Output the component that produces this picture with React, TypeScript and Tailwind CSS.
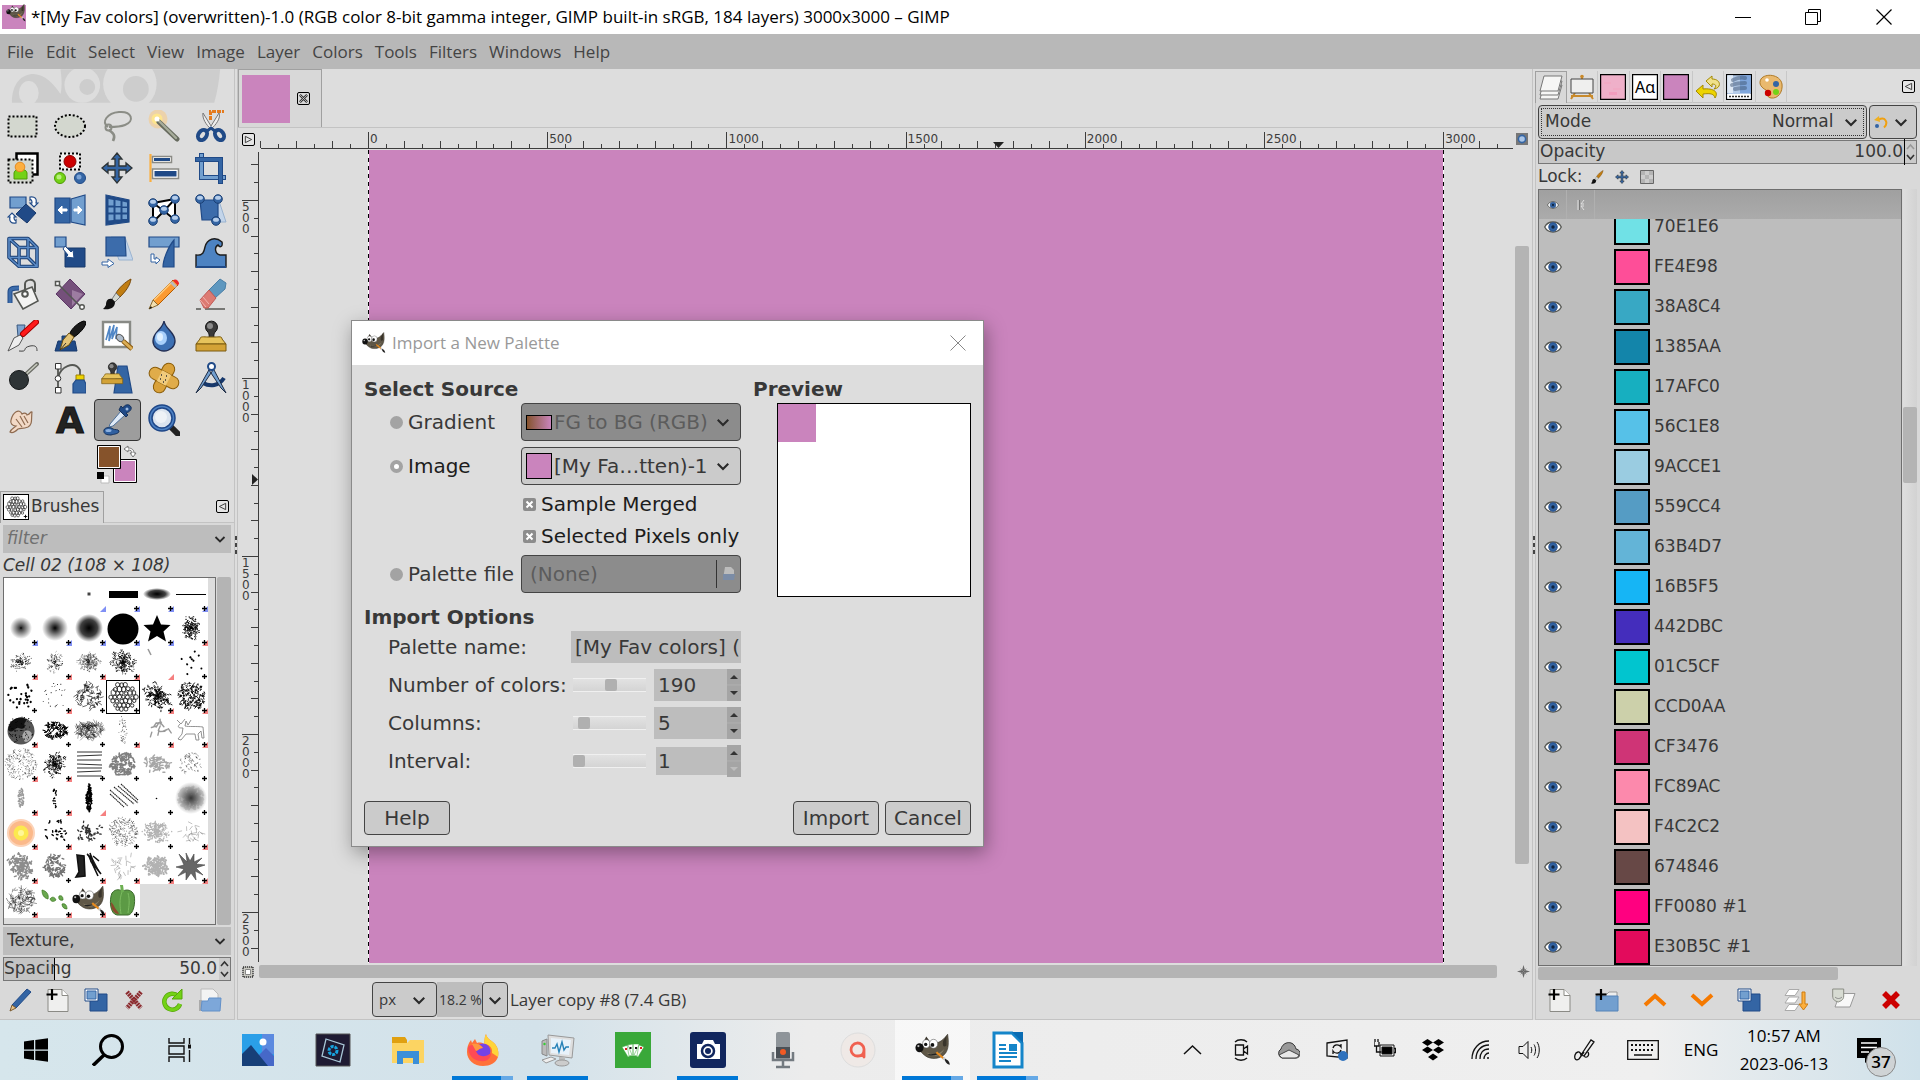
import type { ReactNode } from 'react';

const PINK = '#ca84bd';

/* ---------- shared bits ---------- */

function Icon({ children, className = 'h-8 w-8', box = '0 0 32 32' }: { children: ReactNode; className?: string; box?: string }) {
  return (
    <svg viewBox={box} className={`shrink-0 ${className}`} fill="none" aria-hidden="true">
      {children}
    </svg>
  );
}

function Chevron({ className = 'h-3 w-3' }: { className?: string }) {
  return (
    <Icon box="0 0 12 12" className={`pointer-events-none ${className}`}>
      <path d="M1.500 4l4.500 4.500L10.500 4" stroke="#2a2a2a" strokeWidth="1.800" />
    </Icon>
  );
}

function Wilber({ className = 'h-6 w-6' }: { className?: string }) {
  return (
    <Icon className={className}>
      <path d="M5 11c3 1 5 1 8-1 6 1 11-1 16-8 1 7 1 13-2 17-4 5-13 6-18 2-3-2-5-5-6-7z" fill="#5f5747" stroke="#39342b" strokeWidth=".6" />
      <path d="M8 8l2-4 3 4zM25 8l3-5 0 9c-2 2-4 1-3-4z" fill="#39342b" />
      <path d="M10 18c5 3 12 2 16-3-3 7-11 8-16 3z" fill="#8a8069" />
      <ellipse cx="10" cy="10.500" rx="3.200" ry="3.700" fill="#fff" stroke="#555" strokeWidth=".5" />
      <ellipse cx="16.500" cy="10.500" rx="3.700" ry="4" fill="#fff" stroke="#555" strokeWidth=".5" />
      <circle cx="9.500" cy="11" r="1.500" fill="#111" />
      <circle cx="15.500" cy="11.500" r="1.700" fill="#111" />
      <ellipse cx="4" cy="14" rx="3.600" ry="4" fill="#111" />
      <circle cx="3" cy="12.500" r="1" fill="#bbb" />
      <path d="M12 20c3 1 6 0 9-1" stroke="#222" />
      <path d="M19 18l7 6" stroke="#e58a1f" strokeWidth="2" />
      <path d="M25 23l2 1.500" stroke="#ccc" strokeWidth="2.500" />
      <path d="M26.500 24c2 0 4 2 4.500 5-2 0-4.500-2-4.500-5z" fill="#222" />
    </Icon>
  );
}

function DockMenuButton({ flip = false }: { flip?: boolean }) {
  return (
    <button aria-label="Tab menu" className="flex h-[13px] w-[13px] items-center justify-center rounded-xs border border-black bg-[#e6e6e6]">
      <Icon box="0 0 10 10" className="h-[9px] w-[9px]">
        <path d={flip ? 'M1.500 1.500v7l7-3.500z' : 'M8.500 1.500v7L1.500 5z'} stroke="#333" />
      </Icon>
    </button>
  );
}

function DupIcon() {
  return (
    <Icon box="0 0 24 24" className="h-6 w-6">
      <path d="M6 6h17v17H6z" fill="#3465a4" stroke="#204a87" />
      <path d="M1 1h13v12H1z" fill="#fff" stroke="#204a87" />
      <path d="M3 3h9v8H3z" fill="#729fcf" stroke="#3465a4" />
    </Icon>
  );
}

function NewPageIcon() {
  return (
    <Icon box="0 0 24 24" className="h-6 w-6">
      <path d="M2 1.500h14l6 6V23.500H2z" fill="#efefee" stroke="#8a8a85" />
      <path d="M16 1.500v6h6" fill="#fff" stroke="#8a8a85" />
      <path d="M6 1v11M.500 6.500h11" stroke="#000" strokeWidth="2.200" />
    </Icon>
  );
}

/* ---------- toolbox ---------- */

const DOTS = { stroke: '#000', strokeWidth: 2, strokeDasharray: '2 2' };
const OUT = { stroke: '#204a87', strokeWidth: 1.2 };

function Knob({ x, y }: { x: number; y: number }) {
  return (
    <g>
      <circle cx={x} cy={y} r="4.300" fill="#3465a4" stroke="#1b3f73" />
      <ellipse cx={x} cy={y - 1.3} rx="3" ry="2" fill="#b5cdea" />
    </g>
  );
}

function Stamp({ small = false }: { small?: boolean }) {
  return (
    <g transform={small ? 'scale(.7)' : undefined}>
      <path d="M13 20c2-4 1-6 0-8a6 6 0 1 1 7 0c-1 2-2 4 0 8z" fill="#3a3a3a" stroke="#111" />
      <circle cx="15" cy="6" r="3" fill="#8a8a8a" />
      <path d="M5 19c0-3 4-2 8-2h7c4 0 7-1 7 2l4 5H1z" fill="#e6c35c" stroke="#7a5a10" />
      <path d="M1 24h30v7H1z" fill="#d3a236" stroke="#7a5a10" />
    </g>
  );
}

const TOOLS: { name: string; art: ReactNode }[] = [
  { name: 'Rectangle Select', art: <path d="M1.500 6.500h28v20h-28z" fill="#d3d7cf" {...DOTS} /> },
  { name: 'Ellipse Select', art: <ellipse cx="16" cy="16" rx="15" ry="11" fill="#d3d7cf" {...DOTS} /> },
  {
    name: 'Free Select',
    art: (
      <g stroke="#8b8d86" strokeWidth="2">
        <path d="M7 17C0 12 6 3 18 2c13-1 16 9 6 13-5 2-12 2-16 2" />
        <circle cx="7.500" cy="17.500" r="3" />
        <path d="M8 20c4 3 7 5 4 11" strokeWidth="2.600" />
      </g>
    ),
  },
  {
    name: 'Fuzzy Select',
    art: (
      <g>
        <circle cx="10" cy="9" r="9.500" fill="#fcc77a" opacity=".5" />
        <circle cx="9" cy="9" r="5.500" fill="#fde58e" />
        <path d="M11 12l18 17" stroke="#666a5e" strokeWidth="5" strokeLinecap="round" />
        <path d="M11 11l17 17" stroke="#a7ad9b" strokeWidth="2.400" strokeLinecap="round" />
        <circle cx="9" cy="9" r="2.500" fill="#fff" />
      </g>
    ),
  },
  {
    name: 'Scissors Select',
    art: (
      <g>
        <path d="M8 3c-1 5 3 12 8 16 5-4 10-11 8-16l-8 13z" fill="#eee" stroke="#777" />
        <path d="M15.500 10V1.500H29" stroke="#e57b1e" strokeWidth="3" strokeDasharray="4 1" />
        <ellipse cx="7.500" cy="25" rx="4" ry="5.500" transform="rotate(35 7.500 25)" stroke="#204a87" strokeWidth="4" />
        <ellipse cx="24.500" cy="25" rx="4" ry="5.500" transform="rotate(-35 24.500 25)" stroke="#204a87" strokeWidth="4" />
        <path d="M12 21l4-3 4 3" stroke="#204a87" strokeWidth="3" />
      </g>
    ),
  },
  {
    name: 'Foreground Select',
    art: (
      <g>
        <path d="M9.500 1.500h21v21h-21z" fill="#fff" stroke="#000" strokeWidth="2.500" />
        <path d="M1.500 7.500h24v23h-24z" fill="#d3d7cf" {...DOTS} />
        <path d="M7 27v-6c0-5 13-5 13 0v6z" fill="#73d216" stroke="#4e9a06" />
        <circle cx="13" cy="15" r="4.800" fill="#fcaf3e" stroke="#e58a1f" />
      </g>
    ),
  },
  {
    name: 'Select by Color',
    art: (
      <g>
        <path d="M6 1.500h20v16H6z" fill="#f2f2f0" {...DOTS} />
        <circle cx="16" cy="9.500" r="6" fill="#cc0000" stroke="#8a0000" />
        <circle cx="6" cy="26" r="5.500" fill="#73d216" stroke="#4e9a06" />
        <circle cx="26" cy="26" r="5.500" fill="#3465a4" stroke="#204a87" />
        <circle cx="5" cy="25" r="2.500" fill="#b6ee7b" />
        <circle cx="25" cy="25" r="2.500" fill="#7ba3d6" />
      </g>
    ),
  },
  {
    name: 'Move',
    art: <path d="M16 1l5 6h-3v7h7v-3l6 5-6 5v-3h-7v7h3l-5 6-5-6h3v-7H7v3l-6-5 6-5v3h7V7h-3z" fill="#3465a4" stroke="#2e3436" strokeWidth="1.300" />,
  },
  {
    name: 'Align',
    art: (
      <g>
        <path d="M2.500 2v28" stroke="#fcaf3e" strokeWidth="2.200" />
        <path d="M4.500 4.500h19v6h-19zM4.500 17h26v9.500h-26z" fill="#fff" stroke="#8a8a85" strokeWidth="1.500" />
        <path d="M6 6h16v3H6zM6.500 19h22v5.500h-22z" fill="#204a87" />
      </g>
    ),
  },
  {
    name: 'Crop',
    art: (
      <g>
        <path d="M6.500 1v24.500H31" stroke="#204a87" strokeWidth="5" />
        <path d="M6.500 2v23.500H30" stroke="#729fcf" strokeWidth="3" />
        <path d="M0 7.500h25.500V32" stroke="#204a87" strokeWidth="5" />
        <path d="M1 7.500h24.500V31" stroke="#3465a4" strokeWidth="3" />
      </g>
    ),
  },
  {
    name: 'Unified Transform',
    art: (
      <g>
        <path d="M3 3h16v11H3z" fill="#729fcf" {...OUT} />
        <path d="M19 10l10 9-9 10-11-9z" fill="#204a87" stroke="#17386b" />
        <path d="M23 3c5-1 7 2 6 6h2l-4 4-4-4h2c0-3-1-4-2-3z" fill="#fff" {...OUT} />
        <path d="M9 29c-5 1-7-2-6-6H1l4-4 4 4H7c0 3 1 4 2 3z" fill="#fff" {...OUT} />
      </g>
    ),
  },
  {
    name: 'Flip',
    art: (
      <g>
        <path d="M1 4h15v25H1z" fill="#3465a4" {...OUT} />
        <path d="M17 5l14-4v30l-14-3z" fill="#729fcf" {...OUT} />
        <path d="M4 16l4-4v3h5v2H8v3zM28 16l-4-4v3h-4v2h4v3z" fill="#fff" stroke="#fff" />
      </g>
    ),
  },
  {
    name: 'Perspective',
    art: (
      <g>
        <path d="M5 1l23 5v22L5 31z" fill="#204a87" {...OUT} />
        <path d="M7.500 5l5 1v5.500h-5zM14.500 6l5 1v5h-5zM21.500 7.500l4.500 1v4h-4.500zM7.500 13.500h5v5h-5zM14.500 13.500h5v5h-5zM21.500 14H26v4.500h-4.500zM7.500 20.500h5v5.500l-5 .5zM14.500 20.500h5v5h-5zM21.500 20.500H26v4.500h-4.500z" fill="#729fcf" />
      </g>
    ),
  },
  {
    name: '3D Cage',
    art: (
      <g>
        <path d="M5 9l22-4v21L16 17 5 28z" fill="#fff" stroke="#000" strokeWidth="2" />
        <path d="M5 9l11 8 11-12" stroke="#000" strokeWidth="2" />
        <Knob x={5} y={9} />
        <Knob x={27} y={5} />
        <Knob x={16} y={16} />
        <Knob x={27} y={25} />
        <Knob x={5} y={27} />
      </g>
    ),
  },
  {
    name: 'Cage Transform',
    art: (
      <g>
        <path d="M9 7h15l7 21H17z" fill="#c3d5ea" stroke="#9ab3d0" />
        <path d="M5 6h18v20H7z" fill="#3c6cab" {...OUT} />
        <Knob x={5} y={5} />
        <Knob x={23} y={5} />
        <Knob x={21} y={27} />
      </g>
    ),
  },
  {
    name: '3D Transform',
    art: (
      <g>
        <path d="M2 2.500h19l9 9v19H12l-10-9z" stroke="#1b3f73" strokeWidth="3.600" strokeLinejoin="round" />
        <path d="M12 30.500v-19h18M12 11.500l-10-9M21 2.500v19l9 9M2 21.500h19" stroke="#1b3f73" strokeWidth="3.600" />
        <path d="M2 2.500h19l9 9v19H12l-10-9zM12 30.500v-19h18M12 11.500l-10-9M21 2.500v19l9 9M2 21.500h19" stroke="#5b8bc6" strokeWidth="1.600" />
      </g>
    ),
  },
  {
    name: 'Scale',
    art: (
      <g>
        <path d="M11 12h20v19H11z" fill="#204a87" stroke="#17386b" />
        <path d="M1 1h11v10H1z" fill="#729fcf" {...OUT} />
        <path d="M11 10l6 6 2-2 1 8-8-1 2-2-5-6z" fill="#fff" stroke="#204a87" />
      </g>
    ),
  },
  {
    name: 'Shear',
    art: (
      <g>
        <path d="M10 1h14l8 23H18z" fill="#c3d5ea" stroke="#9ab3d0" />
        <path d="M5 1h19l1 19H5z" fill="#3c6cab" {...OUT} />
        <path d="M1 26h6v-3l6 4.500-6 4V29H1z" fill="#fff" stroke="#3465a4" />
      </g>
    ),
  },
  {
    name: 'Handle Transform',
    art: (
      <g>
        <path d="M1 1h30v10H1z" fill="#729fcf" {...OUT} />
        <path d="M26 4v27H15c0-7 5-20 11-27z" fill="#3465a4" {...OUT} />
        <path d="M3 18h3v5h2v-2l4 3-4 4v-2H3z" fill="#fff" stroke="#3465a4" />
      </g>
    ),
  },
  {
    name: 'Warp Transform',
    art: (
      <g>
        <path d="M1 31V19C8 20 9 16 10 11 12 3 20 0 27 6c1 5-2 6-4 3-4 2-3 9 2 10h6v12z" fill="#4d83c2" stroke="#1c1c1c" strokeWidth="1.400" />
        <path d="M1 31h30" stroke="#204a87" strokeWidth="2" />
      </g>
    ),
  },
  {
    name: 'Bucket Fill',
    art: (
      <g>
        <path d="M3 25V14c0-3 2-4 9-4" stroke="#204a87" strokeWidth="5" />
        <path d="M3 25V14c0-3 2-4 9-4" stroke="#3c6cab" strokeWidth="3" />
        <path d="M7 16l18-7 6 14-15 8z" fill="#f3f3f2" stroke="#555753" strokeWidth="1.600" />
        <path d="M18 16V6c0-5 10-6 10 0v8" stroke="#555753" strokeWidth="2" />
        <circle cx="18" cy="16" r="2.800" stroke="#555753" strokeWidth="2" fill="#fff" />
      </g>
    ),
  },
  {
    name: 'Gradient',
    art: (
      <g>
        <path d="M16 1l15 15-14 15L2 16z" fill="#75507b" stroke="#5c3566" />
        <path d="M18 12l11 4-11 12z" fill="#b79abb" opacity=".6" />
        <path d="M3 5l24 24" stroke="#555753" strokeWidth="1.600" />
        <path d="M1.500 3.500h4v4h-4z" fill="#fff" stroke="#555753" strokeWidth="1.500" />
        <circle cx="28" cy="29" r="2.300" fill="#fff" stroke="#555753" strokeWidth="1.500" />
      </g>
    ),
  },
  {
    name: 'Paintbrush',
    art: (
      <g>
        <path d="M30 1c-6 3-12 9-15 14l4 4c5-5 10-11 11-18z" fill="#c17d11" stroke="#7a4a0a" />
        <path d="M15 15l-4 6 3 3 5-5z" fill="#d3d7cf" stroke="#777" />
        <path d="M11 21c-5-1-6 3-6 6-1 2-2 3-3 4 7 1 12-1 12-7z" fill="#111" />
      </g>
    ),
  },
  {
    name: 'Pencil',
    art: (
      <g>
        <path d="M25 2l5 5L10 27l-5-5z" fill="#fb9a31" stroke="#b35c00" />
        <path d="M23 5l-17 17" stroke="#ffd083" strokeWidth="1.500" />
        <path d="M5 22l5 5-9 4z" fill="#f3dfb0" stroke="#8a6a30" />
        <path d="M3 28l-2 3 3-1z" fill="#111" />
        <path d="M22 5l5 5 2-2-5-5z" fill="#bbb" />
        <path d="M25 2.500c3-3 8 2 5 5z" fill="#ef2929" />
      </g>
    ),
  },
  {
    name: 'Eraser',
    art: (
      <g>
        <path d="M1 31h5M10 31h20" stroke="#555753" strokeWidth="1.600" />
        <path d="M14 12L25 1l6 4-1 6-10 9z" fill="#5e97bf" stroke="#4a7fa6" />
        <path d="M5 22l9-10 7 8-8 10H9z" fill="#dd7a72" stroke="#c05a55" />
        <path d="M5 22l6 7M8 19l6 7" stroke="#f3b5b0" />
      </g>
    ),
  },
  {
    name: 'Airbrush',
    art: (
      <g>
        <path d="M10 5h8l-2 12h-5z" fill="#7fa3cf" stroke="#3a5a80" />
        <path d="M29 2L16 14" stroke="#a00000" strokeWidth="6" strokeLinecap="round" />
        <path d="M29 2L16 14" stroke="#ff1a1a" strokeWidth="4" strokeLinecap="round" />
        <path d="M1 31l6-13 6-3 3 3-4 7z" fill="#eee" stroke="#555" />
        <path d="M12 31c10 1 2-3 11-5 6-1 7 1 7 5" stroke="#444" />
      </g>
    ),
  },
  {
    name: 'Ink',
    art: (
      <g>
        <path d="M1 31l3-10h4v-5h8v5h5l2 10z" fill="#204a87" stroke="#17386b" />
        <path d="M30 1c-5 1-12 7-14 12l4 4c5-3 12-10 12-15z" fill="#1a1a1a" stroke="#000" />
        <path d="M15 13l-6 7-3 10 9-5 5-8z" fill="#e3c478" stroke="#6b5010" />
        <path d="M6 30l6-7" stroke="#333" />
      </g>
    ),
  },
  {
    name: 'MyPaint Brush',
    art: (
      <g>
        <path d="M2 2h27v25H2z" fill="#fff" stroke="#888a85" strokeWidth="2.400" />
        <path d="M5 20L9 6l-1 15 5-16-2 14 5-12-1 11 2-1" stroke="#4f86c6" strokeWidth="1.600" />
        <ellipse cx="19" cy="18" rx="4" ry="3" transform="rotate(40 19 18)" fill="#aebccb" stroke="#555" />
        <path d="M22 21l9 8" stroke="#8a5a10" strokeWidth="5" />
        <path d="M22 21l9 8" stroke="#dcae55" strokeWidth="3" />
      </g>
    ),
  },
  {
    name: 'Blur',
    art: (
      <g>
        <path d="M16 1c1 8 11 11 11 20a11 10 0 0 1-22 0C5 12 15 9 16 1z" fill="#3d70b3" stroke="#222f55" strokeWidth="1.400" />
        <ellipse cx="13" cy="18" rx="6" ry="7" fill="#a9d0fb" />
        <ellipse cx="12" cy="17" rx="3" ry="4" fill="#dff0ff" />
      </g>
    ),
  },
  { name: 'Clone', art: <Stamp /> },
  {
    name: 'Dodge / Burn',
    art: (
      <g>
        <path d="M18 13L30 2" stroke="#6b6d66" strokeWidth="4" strokeLinecap="round" />
        <path d="M18 13L30 2" stroke="#c9ccc0" strokeWidth="1.600" />
        <circle cx="12" cy="18" r="9.500" fill="#2e3436" stroke="#16191a" />
      </g>
    ),
  },
  {
    name: 'Paths',
    art: (
      <g>
        <path d="M4 4v24M4 16C6 5 20-2 26 8v5" stroke="#555753" strokeWidth="1.800" />
        <path d="M1.500 1.500h5.500v5.500H1.500zM1.500 25.500h5.500v5.500H1.500z" fill="#fff" stroke="#333" />
        <circle cx="4" cy="16.500" r="2.800" fill="#fff" stroke="#333" />
        <path d="M22 13h8v5h-8z" fill="#edd400" stroke="#a08000" />
        <path d="M19 31V22l3-4h8l2 4v9z" fill="#3465a4" {...OUT} />
      </g>
    ),
  },
  {
    name: 'Perspective Clone',
    art: (
      <g>
        <path d="M17 4h9l5 27H13z" fill="#3465a4" {...OUT} />
        <Stamp small />
      </g>
    ),
  },
  {
    name: 'Heal',
    art: (
      <g stroke="#8a5c08">
        <rect x="10" y="0" width="12" height="32" rx="6" fill="#d9a13a" transform="rotate(28 16 16)" />
        <rect x="0" y="10" width="32" height="12" rx="6" fill="#e0ac4a" transform="rotate(28 16 16)" />
        <rect x="11" y="10" width="10" height="12" fill="#f0cb7c" stroke="none" transform="rotate(28 16 16)" />
        <path d="M13 13h1M18 14h1M12 17h1M17 18h1M15 20h1" stroke="#333" strokeWidth="1.500" />
      </g>
    ),
  },
  {
    name: 'Measure',
    art: (
      <g>
        <path d="M8 21c7 4 16 3 21-5" stroke="#17386b" strokeWidth="4" />
        <path d="M15 6L1 31l5-5L18 8zM18 6l13 25-5-5L14 8z" fill="#729fcf" stroke="#1c2b44" />
        <circle cx="16.500" cy="4.500" r="3.500" fill="#fff" stroke="#204a87" strokeWidth="2" />
      </g>
    ),
  },
  {
    name: 'Smudge',
    art: (
      <path d="M3 28c1-3 4-4 6-6-4 0-6-3-5-6C6 8 12 4 15 10c3-2 5 0 5 1 4-1 3-4 5-3-1 7 1 12-4 15-5 2-7 1-10 2-2 2-5 5-8 3zM9 15l6 8M13 12l5 9M17 12l4 7" fill="#f2d9c6" stroke="#8f6b50" strokeWidth="1.200" />
    ),
  },
  {
    name: 'Text',
    art: (
      <text x="16" y="29" textAnchor="middle" fontSize="36" fontWeight="bold" fontFamily="DejaVu Sans, sans-serif" fill="#222" stroke="#111">
        A
      </text>
    ),
  },
  {
    name: 'Color Picker',
    art: (
      <g>
        <path d="M9 20L20 7l4 4-12 11-4 1z" fill="#dfeaf7" stroke="#4c6f99" />
        <path d="M18 6l7 7 2-2-2-2c4-1 6-4 5-6-2-4-7-2-8 1l-2-2z" fill="#204a87" stroke="#16325c" />
        <circle cx="26" cy="5" r="1.500" fill="#9dbbe2" />
        <path d="M3 26c1-3 7-3 9-1 2 1 5 0 6 2 0 3-5 3-8 4-4 0-8-1-7-5z" fill="#2f5fa0" stroke="#16325c" />
        <ellipse cx="7.500" cy="26.500" rx="3" ry="1.500" fill="#8bb0df" />
      </g>
    ),
  },
  {
    name: 'Zoom',
    art: (
      <g>
        <path d="M22 22l8 8" stroke="#222" strokeWidth="6" strokeLinecap="round" />
        <circle cx="14" cy="14" r="11.500" fill="#dbe4ef" stroke="#1f4788" strokeWidth="4.500" />
        <circle cx="14" cy="14" r="11.500" stroke="#4d82c4" strokeWidth="1.500" />
        <circle cx="13" cy="13" r="6" fill="#eef2f7" />
      </g>
    ),
  },
];

function Toolbox() {
  return (
    <section aria-label="Toolbox" className="flex flex-col">
      <svg viewBox="0 0 237 34" className="h-[34px] w-[235px]" aria-hidden="true">
        <path d="M12 34C12 14 22 5 34 5c12 1 20 10 27 20 2-8 1-18 0-25h161c-1 12-3 24-6 34z" fill="#cdcdcd" />
        <g fill="#dddddd">
          <ellipse cx="29" cy="24" rx="10" ry="12" />
          <circle cx="83" cy="16" r="18" />
          <circle cx="131" cy="15" r="27" />
        </g>
        <circle cx="88" cy="18" r="8" fill="#cdcdcd" />
        <circle cx="137" cy="20" r="13" fill="#cdcdcd" />
      </svg>
      <div className="grid w-[235px] grid-cols-5 pt-0.5">
        {TOOLS.map(({ name, art }) => (
          <button
            key={name}
            aria-label={name}
            className={
              name === 'Color Picker'
                ? 'flex h-[42px] items-center justify-center rounded-sm border border-[#333] bg-[#9d9d9d] pr-0.5'
                : 'flex h-[42px] items-center justify-center rounded-sm pr-0.5'
            }
          >
            <Icon>{art}</Icon>
          </button>
        ))}
      </div>
      <div className="flex h-[50px] justify-center pt-1">
        <svg viewBox="0 0 40 39" className="h-[39px] w-10" role="img" aria-label="Foreground and background colors">
          <path d="M16.500 14.500h23v23h-23z" fill={PINK} stroke="#000" />
          <path d="M17.500 15.500h21v21h-21z" fill="none" stroke="#fff" />
          <path d="M.5.5h23v23H.5z" fill="#86532b" stroke="#000" />
          <path d="M1.500 1.500h21v21h-21z" fill="none" stroke="#fff" />
          <path d="M4 31h8v7H4z" fill="#fff" stroke="#bbb" />
          <path d="M0 27h7v7H0z" fill="#000" />
          <path d="M27 4l4-3v2c4 0 6 2 6 5h2l-3 4-3-4h2c0-2-1-3-4-3v2z" fill="#fff" stroke="#777" />
        </svg>
      </div>
    </section>
  );
}

/* ---------- brushes ---------- */

type Spray = { n: number; rx: number; ry: number; w: number; o?: number; flat?: boolean; dash?: number };
type Brush = { mark?: 'plus' | 'plusRed' | 'plusBlue' | 'red' | 'blue'; spray?: Spray; art?: ReactNode };

function makeRandom(seed: number) {
  let s = seed * 7919 + 17;
  return () => {
    s = (s * 16807) % 2147483647;
    return s / 2147483647;
  };
}

// centre-heavy sprays get a lobed outline, flat ones stay round
function sprayPath(seed: number, { n, rx, ry, flat, dash = 0.1 }: Spray) {
  const rand = makeRandom(seed + 3);
  let d = '';
  for (let i = 0; i < n; i++) {
    const a = rand() * Math.PI * 2;
    const r = flat ? Math.sqrt(rand()) : Math.pow(rand(), 0.75) * (0.85 + 0.3 * Math.sin(a * 3 + seed) * Math.cos(a * 5));
    const x = 17 + Math.cos(a) * r * rx;
    const y = 16 + Math.sin(a) * r * ry;
    const t = rand() * Math.PI * 2;
    d += `M${x.toFixed(1)} ${y.toFixed(1)}l${(Math.cos(t) * dash).toFixed(1)} ${(Math.sin(t) * dash + 0.1).toFixed(1)}`;
  }
  return d;
}

function cellPath() {
  const rand = makeRandom(9);
  let d = '';
  for (let row = -3; row <= 3; row++) {
    for (let col = -4; col <= 4; col++) {
      const x = col * 4.2 + (row % 2 ? 2.1 : 0) + rand();
      const y = row * 4 + rand();
      if (Math.hypot(x, y) > 13.5) continue;
      const r = 1.6 + rand() * 0.7;
      d += `M${(17 + x - r).toFixed(1)} ${(16.5 + y).toFixed(1)}a${r.toFixed(1)} ${r.toFixed(1)} 0 1 0 ${(r * 2).toFixed(1)} 0a${r.toFixed(1)} ${r.toFixed(1)} 0 1 0 ${(-r * 2).toFixed(1)} 0`;
    }
  }
  return d;
}

function Soft({ id, r, ry = r, solid }: { id: string; r: number; ry?: number; solid: string }) {
  return (
    <>
      <radialGradient id={id}>
        <stop offset="0" stopColor="#000" />
        <stop offset={solid} stopColor="#000" stopOpacity=".75" />
        <stop offset="1" stopColor="#000" stopOpacity="0" />
      </radialGradient>
      <ellipse cx="17" cy="16" rx={r} ry={ry} fill={`url(#${id})`} />
    </>
  );
}

const CELLS = <path d={cellPath()} stroke="#222" strokeWidth=".9" fill="none" />;

const BRUSHES: Brush[] = [
  {},
  {},
  { mark: 'blue', art: <path d="M15.500 14.500h3v3h-3z" fill="#444" /> },
  { mark: 'plusBlue', art: <path d="M3 13h29v7H3z" fill="#000" /> },
  { mark: 'plusBlue', art: <Soft id="b4" r={14} ry={6} solid="60%" /> },
  { mark: 'plusBlue', art: <path d="M2 16.500h30" stroke="#000" /> },
  { mark: 'plusBlue', art: <Soft id="b6" r={11} solid="15%" /> },
  { mark: 'plusBlue', art: <Soft id="b7" r={13} solid="25%" /> },
  { mark: 'plusBlue', art: <Soft id="b8" r={14} solid="60%" /> },
  { mark: 'plusBlue', art: <circle cx="17" cy="17" r="15.500" fill="#000" /> },
  { mark: 'plusBlue', art: <path d="M17 3l4 9.500 9.500.5-7 6.500 2.500 10L17 24l-9 5.500 2.500-10-7-6.500 9.500-.5z" fill="#000" /> },
  { mark: 'plusRed', spray: { n: 300, rx: 11, ry: 12, w: 1 } },
  { mark: 'plusRed', spray: { n: 150, rx: 12, ry: 9, w: 0.9, o: 0.8 } },
  { mark: 'plusRed', spray: { n: 130, rx: 8, ry: 13, w: 0.9, o: 0.7 } },
  { mark: 'plusRed', spray: { n: 380, rx: 11, ry: 12, w: 1, o: 0.4 } },
  { mark: 'plusRed', spray: { n: 380, rx: 13, ry: 14, w: 1, o: 0.85 } },
  { mark: 'red', art: <path d="M8 3l3 6" stroke="#999" strokeWidth="1.500" /> },
  { mark: 'plus', spray: { n: 11, rx: 13, ry: 13, w: 2, flat: true } },
  { mark: 'plus', spray: { n: 30, rx: 14, ry: 13, w: 2.2, flat: true } },
  { mark: 'plusRed', spray: { n: 22, rx: 14, ry: 13, w: 0.9, flat: true } },
  { mark: 'plus', spray: { n: 90, rx: 13, ry: 13, w: 0.6, flat: true, dash: 3 } },
  { mark: 'plus', art: CELLS },
  { mark: 'plusRed', spray: { n: 190, rx: 15, ry: 14, w: 0.9, dash: 1.4 } },
  { mark: 'plusRed', spray: { n: 200, rx: 14, ry: 14, w: 0.9, flat: true, dash: 1.4 } },
  {
    mark: 'plusRed',
    art: (
      <>
        <circle cx="17" cy="17" r="13.500" fill="#555" />
        <path d="M4 16C5 7 12 3 18 3.500c4 1 5 3 3 5s2 5-2 6-4-2-7 0-4 5-8 1.500z" fill="#111" />
        <path d="M20 18c3-3 7-1 8 2s-3 8-6 8-1-3-3-4 0-4 1-6z" fill="#aaa" />
      </>
    ),
    spray: { n: 60, rx: 14, ry: 14, w: 1, flat: true },
  },
  { mark: 'plus', spray: { n: 120, rx: 13, ry: 8, w: 1, flat: true, dash: 2 } },
  { mark: 'plus', spray: { n: 160, rx: 13, ry: 8, w: 0.5, flat: true, dash: 4, o: 0.7 } },
  { mark: 'plusRed', spray: { n: 45, rx: 4, ry: 15, w: 0.9, flat: true, o: 0.6 } },
  { mark: 'plusRed', spray: { n: 12, rx: 14, ry: 12, w: 1.4, flat: true, dash: 5, o: 0.4 } },
  {
    mark: 'plusRed',
    art: <path d="M3 6l4 4 4-5M6 10c-4 4 0 4 3 4l-1 6-4 5 3 1 5-6h9l1 6h3l-1-6 3-3 1 7h2l-1-11c-7-1-14 0-18-1l1-5 2 4 3-5" stroke="#777" fill="none" strokeWidth=".8" />,
  },
  { mark: 'plusRed', spray: { n: 230, rx: 16, ry: 16, w: 0.7, flat: true, o: 0.7 } },
  { mark: 'plusRed', spray: { n: 380, rx: 12, ry: 13, w: 1, o: 0.85 } },
  { mark: 'plus', art: <path d="M5 4h25M5 8l25-1M5 12h24M5 16l25 1M5 20h25M5 24l24-1M5 28h25" stroke="#333" fill="none" /> },
  { mark: 'plus', spray: { n: 110, rx: 12, ry: 12, w: 1.6, flat: true, dash: 2, o: 0.5 } },
  { mark: 'plus', spray: { n: 80, rx: 14, ry: 12, w: 1.4, dash: 2, o: 0.35 } },
  { mark: 'plus', spray: { n: 60, rx: 12, ry: 12, w: 0.9, flat: true, dash: 1, o: 0.45 } },
  { mark: 'plusRed', spray: { n: 80, rx: 3, ry: 10, w: 1.4, flat: true, o: 0.4 } },
  { mark: 'plusRed', spray: { n: 18, rx: 3, ry: 10, w: 1.6, flat: true } },
  { mark: 'red', spray: { n: 110, rx: 3, ry: 14, w: 1.8, flat: true } },
  { mark: 'plus', art: <path d="M4 8l18 16M4 12l14 13M8 5l20 17M12 4l20 17M15 2l17 16" stroke="#222" strokeWidth="1.100" strokeDasharray="1.500 .5" /> },
  { mark: 'plus', art: <circle cx="16.500" cy="16.500" r=".8" fill="#000" /> },
  { mark: 'plus', spray: { n: 240, rx: 13, ry: 12, w: 2.4, flat: true, o: 0.12 }, art: <Soft id="b41" r={16} solid="1%" /> },
  {
    mark: 'plusRed',
    art: (
      <>
        <circle cx="17" cy="17" r="14" fill="#fcd3b8" />
        <circle cx="17" cy="17" r="12" fill="#fbb98a" />
        <circle cx="17" cy="17" r="7.500" fill="#fce94f" />
        <circle cx="17" cy="17" r="3" fill="#fff799" />
      </>
    ),
  },
  { mark: 'plusRed', spray: { n: 26, rx: 14, ry: 13, w: 1.4, flat: true, dash: 1.5 } },
  { mark: 'plusRed', spray: { n: 50, rx: 14, ry: 13, w: 1.3, dash: 1.5, o: 0.8 } },
  { mark: 'plus', spray: { n: 260, rx: 15, ry: 15, w: 0.7, flat: true, o: 0.7 } },
  { mark: 'plus', spray: { n: 320, rx: 14, ry: 14, w: 1.3, o: 0.3 } },
  { mark: 'plusRed', spray: { n: 24, rx: 11, ry: 13, w: 0.8, flat: true, dash: 4, o: 0.3 } },
  { mark: 'plusRed', spray: { n: 150, rx: 14, ry: 14, w: 1.4, dash: 2, o: 0.45 } },
  { mark: 'plus', spray: { n: 110, rx: 11, ry: 11, w: 1.2, flat: true, dash: 2, o: 0.55 } },
  {
    mark: 'plusRed',
    art: <path d="M5 5l7 1 1 20-9 1 3-5zM15 4c5 3 2 6 5 9l6 13M18 3l4 12 7 9M21 6l6 5" stroke="#111" strokeWidth="1.600" fill="#222" />,
  },
  { mark: 'plusRed', spray: { n: 26, rx: 11, ry: 13, w: 0.8, flat: true, dash: 4, o: 0.3 } },
  { mark: 'plusRed', spray: { n: 300, rx: 13, ry: 13, w: 1.8, o: 0.3 } },
  {
    mark: 'plusRed',
    art: <path d="M5 4l8 8-1-9 4 8 4-7v8l8-4-6 6 9 1-9 3 7 7-8-4 1 9-5-7-5 7v-8l-8 4 6-7-8-2 8-2z" fill="#666" stroke="#444" strokeWidth=".6" />,
  },
  { mark: 'plusRed', spray: { n: 130, rx: 14, ry: 12, w: 0.7, flat: true, dash: 3, o: 0.6 } },
  {
    mark: 'plusRed',
    art: <path d="M4 6c5 1 7 5 6 9-4-1-6-4-6-9zM12 15c2-3 5-2 6 1-2 2-5 2-6-1zM21 12c3-1 4 1 4 4-3 1-5-1-4-4zM24 20c3-1 5 1 5 5-3 0-5-2-5-5z" fill="#6aa84f" stroke="#38761d" strokeWidth=".7" />,
  },
  { mark: 'plusRed' },
  {
    mark: 'plus',
    art: (
      <>
        <path d="M6 9c4-5 8-3 11-2 4-2 9-1 11 4 2 8-1 20-6 20H11C4 30 3 16 6 9z" fill="#5c9a45" stroke="#3c6b2c" />
        <path d="M16 8c-3 8-2 15-1 22M22 9c2 7 1 13 0 20" stroke="#7cbb61" fill="none" />
        <path d="M5 18c3 3 3 4 4 6s3 3 4 6c-6 0-8-6-8-12z" fill="#8a4b2c" />
        <path d="M15 8l-1-7h3l1 7z" fill="#6db052" />
      </>
    ),
  },
];

const PLUS = <path d="M30.500 28v5M28 30.500h5" stroke="#000" strokeWidth="1.300" />;

function BrushCell({ brush, index }: { brush: Brush; index: number }) {
  const { mark, spray, art } = brush;
  return (
    <li className={index === 21 ? 'h-[34px] w-[34px] bg-white outline-1 -outline-offset-1 outline-black' : 'h-[34px] w-[34px] bg-white'}>
      <svg viewBox="0 0 34 34" className="h-[34px] w-[34px]" aria-hidden="true">
        {index === 56 ? <Wilber className="h-[34px] w-[34px]" /> : art}
        {spray && <path d={sprayPath(index, spray)} stroke="#000" strokeWidth={spray.w} strokeOpacity={spray.o ?? 1} strokeLinecap="round" />}
        {mark?.toLowerCase().includes('red') && <path d="M34 28v6h-6z" fill="#f58080" />}
        {mark?.toLowerCase().includes('blue') && <path d="M34 28v6h-6z" fill="#8090f5" />}
        {mark?.startsWith('plus') && PLUS}
      </svg>
    </li>
  );
}

function Brushes() {
  return (
    <section aria-label="Brushes" className="flex min-h-0 flex-1 flex-col text-[17px]">
      <div className="flex h-8 items-center justify-between border-b border-[#c3c3c3] pr-[5px]">
        <div className="flex h-8 w-[104px] items-center gap-0.5 border border-b-0 border-[#a0a0a0] bg-[#d8d8d8] pl-0.5">
          <svg viewBox="0 0 34 34" className="h-[26px] w-[26px] shrink-0 border border-black bg-white" aria-hidden="true">
            {CELLS}
            {PLUS}
          </svg>
          Brushes
        </div>
        <DockMenuButton />
      </div>
      <div className="flex min-h-0 flex-1 flex-col bg-[#d9d9d9] px-[3px] pt-0.5">
        <label className="flex h-7 shrink-0 items-center bg-[#bdbdbd] pr-[5px] pl-1">
          <input aria-label="Filter brushes" placeholder="filter" className="w-full min-w-0 bg-transparent italic outline-none placeholder:text-[#707070]" />
          <Chevron />
        </label>
        <p className="h-6 shrink-0 leading-6 whitespace-nowrap italic">Cell 02 (108 × 108)</p>
        <div className="flex min-h-0 flex-1">
          <ul className="flex min-h-0 flex-1 flex-wrap content-start overflow-hidden border border-[#6e6e6e] bg-[#dddddd]">
            {BRUSHES.map((brush, i) => (
              <BrushCell key={i} brush={brush} index={i} />
            ))}
          </ul>
          <div className="ml-px w-[14px] rounded-xs bg-[#b4b4b4]" />
        </div>
        <label className="mt-0.5 flex h-7 shrink-0 items-center bg-[#bdbdbd] pr-[5px] pl-1">
          <select aria-label="Tag" className="w-full appearance-none bg-transparent outline-none">
            <option>Texture,</option>
          </select>
          <Chevron />
        </label>
        <label className="mt-0.5 flex h-6 shrink-0 items-center border border-[#777] bg-[linear-gradient(to_right,#c4c4c4_50px,#000_50px,#000_51px,#dcdcdc_51px)]">
          Spacing
          <input defaultValue="50.0" className="min-w-0 flex-1 bg-transparent pr-0.5 text-right outline-none" />
          <Spinner />
        </label>
      </div>
      <div className="flex h-[38px] shrink-0 items-center gap-[14px] bg-[#d9d9d9] px-2">
        {BRUSH_ACTIONS.map(({ name, art }) => (
          <button key={name} aria-label={name}>
            {art}
          </button>
        ))}
      </div>
    </section>
  );
}

function Spinner({ dimUp = false }: { dimUp?: boolean }) {
  return (
    <Icon box="0 0 10 22" className="h-[22px] w-[11px] bg-[#cacaca]">
      <path d="M1.500 8L5 4l3.500 4" stroke={dimUp ? '#999' : '#333'} strokeWidth="1.600" />
      <path d="M1.500 14L5 18l3.500-4" stroke="#333" strokeWidth="1.600" />
    </Icon>
  );
}

const BRUSH_ACTIONS: { name: string; art: ReactNode }[] = [
  {
    name: 'Edit brush',
    art: (
      <Icon box="0 0 24 24" className="h-6 w-6">
        <path d="M19 1l4 3L8 20l-4-3z" fill="#3465a4" stroke="#204a87" />
        <path d="M4 17l4 3-6 3z" fill="#e9c48a" stroke="#7a5a30" />
      </Icon>
    ),
  },
  { name: 'New brush', art: <NewPageIcon /> },
  { name: 'Duplicate brush', art: <DupIcon /> },
  {
    name: 'Delete brush',
    art: (
      <Icon box="0 0 24 24" className="h-6 w-6">
        <path d="M5 4l14 16M19 4L5 20" stroke="#8b2a2e" strokeWidth="4.500" strokeDasharray="2 .6" />
      </Icon>
    ),
  },
  {
    name: 'Refresh brushes',
    art: (
      <Icon box="0 0 24 24" className="h-6 w-6">
        <path d="M18 8a8 8 0 1 0 2 8" stroke="#57a70a" strokeWidth="4.500" />
        <path d="M18 8a8 8 0 1 0 2 8" stroke="#73d216" strokeWidth="3" />
        <path d="M12 11h10V1z" fill="#73d216" stroke="#57a70a" />
      </Icon>
    ),
  },
  {
    name: 'Open brush as image',
    art: (
      <Icon box="0 0 24 24" className="h-6 w-6">
        <path d="M3 1h12l5 5v14H3z" fill="#f3f3f3" stroke="#bbb" />
        <path d="M1 12v11h3V12z" fill="#aaa" />
        <path d="M3 22l1-9h6l1-3h12l-1 13H4z" fill="#7da7d9" stroke="#6390c8" />
      </Icon>
    ),
  },
];

/* ---------- image window ---------- */

const STEP_X = 17.92;
const STEP_Y = 17.8;
const RULER_INK = '#3c3c3c';

function tickLength(i: number) {
  if (i % 10 === 0) return 16;
  return i % 2 === 0 ? 7 : 4;
}

function HorizontalRuler() {
  const ticks = Array.from({ length: 130 }, (_, k) => k - 6);
  return (
    <svg className="h-full w-full overflow-hidden" aria-hidden="true">
      <path d="M2 20.500h1252" stroke={RULER_INK} />
      {ticks.map((i) => {
        const x = Math.round(109 + i * STEP_X) + 0.5;
        return x > 1254 ? null : <path key={i} d={`M${x} 20v-${tickLength(i)}`} stroke={RULER_INK} />;
      })}
      {[0, 500, 1000, 1500, 2000, 2500, 3000].map((v) => (
        <text key={v} x={111 + (v / 50) * STEP_X} y="15" fontSize="12" fill={RULER_INK}>
          {v}
        </text>
      ))}
      <path d="M734 14h11l-5.500 6z" fill="#222" />
    </svg>
  );
}

function VerticalRuler() {
  const ticks = Array.from({ length: 46 }, (_, k) => k + 8);
  return (
    <svg className="h-full w-full overflow-hidden" aria-hidden="true">
      <path d="M20.500 2v810" stroke={RULER_INK} />
      {ticks.map((i) => (
        <path key={i} d={`M20 ${Math.round(i * STEP_Y - 128) + 0.5}h-${tickLength(i)}`} stroke={RULER_INK} />
      ))}
      {[500, 1000, 1500, 2000, 2500].map((v) =>
        String(v)
          .split('')
          .map((digit, k) => (
            <text key={`${v}-${k}`} x="4" y={(v / 50) * STEP_Y - 117 + k * 11} fontSize="12" fill={RULER_INK}>
              {digit}
            </text>
          )),
      )}
      <path d="M14 324v11l6-5.500z" fill="#222" />
    </svg>
  );
}

const EDGE = 'w-px shrink-0 bg-[repeating-linear-gradient(to_bottom,#000_0_4px,#fff_4px_8px)]';

function ImageWindow() {
  return (
    <main className="flex min-w-0 flex-1 flex-col border-x border-b border-[#c3c3c3]">
      <div className="flex h-[59px] shrink-0 items-end border-b border-[#c3c3c3]">
        <div className="flex h-[58px] w-[84px] items-center gap-[7px] border border-b-0 border-[#a0a0a0] bg-[#d8d8d8] pl-[3px]">
          <div className="h-12 w-12 bg-[#ca84bd]" />
          <button aria-label="Close image" className="flex h-[13px] w-[13px] items-center justify-center rounded-xs border border-black">
            <Icon box="0 0 10 10" className="h-[9px] w-[9px]">
              <path d="M1 1l8 8M9 1L1 9" stroke="#333" strokeWidth="2.600" />
              <path d="M1 1l8 8M9 1L1 9" stroke="#ddd" strokeWidth=".8" />
            </Icon>
          </button>
        </div>
      </div>
      <div className="grid min-h-0 flex-1 grid-cols-[21px_1fr_18px] grid-rows-[22px_1fr_17px]">
        <div className="flex items-center pl-1">
          <DockMenuButton flip />
        </div>
        <HorizontalRuler />
        <button aria-label="Zoom image when window size changes" className="flex items-center pl-0.5">
          <Icon box="0 0 12 12" className="h-3 w-3 bg-[#777]">
            <circle cx="6" cy="6" r="3.600" fill="#a9c4e6" stroke="#3465a4" strokeWidth="1.600" />
          </Icon>
        </button>
        <VerticalRuler />
        <div className="flex min-h-0">
          <div className={`ml-[109px] ${EDGE}`} />
          <div className="flex-1 bg-[#ca84bd]" />
          <div className={`mr-[70px] ${EDGE}`} />
        </div>
        <div className="flex flex-col pr-[3px] pl-px">
          <div className="h-24" />
          <div className="h-[618px] rounded-xs bg-[#b4b4b4]" />
        </div>
        <div className="flex items-center pl-1">
          <button aria-label="Toggle Quick Mask">
            <Icon box="0 0 12 12" className="h-3 w-3">
              <path d="M1 1h10v10H1z" fill="#c9c9c2" stroke="#333" strokeWidth="1.400" strokeDasharray="1.200 .8" />
              <path d="M3.500 3.500h5v5h-5z" fill="#fff" stroke="#888" />
            </Icon>
          </button>
        </div>
        <div className="flex items-center">
          <div className="h-[13px] flex-1 rounded-xs bg-[#b4b4b4]" />
          <div className="w-[17px]" />
        </div>
        <button aria-label="Navigate" className="flex items-center pl-[3px]">
          <Icon box="0 0 14 14" className="h-[13px] w-[13px]">
            <path d="M7 0l1.500 5.500L14 7 8.500 8.500 7 14 5.500 8.500 0 7l5.500-1.500z" fill="#666" />
            <path d="M4 4l6 6M10 4l-6 6" stroke="#888" />
          </Icon>
        </button>
      </div>
      <div className="flex h-[39px] shrink-0 items-center pl-[134px] font-['Open_Sans',sans-serif]">
        <label className="flex h-[35px] w-[65px] items-center rounded-sm border border-[#444] bg-[#cbcbcb] pr-2.5 pl-1.5">
          <select aria-label="Unit" className="w-full appearance-none bg-transparent text-[15px] outline-none">
            <option>px</option>
          </select>
          <Chevron className="h-3.5 w-3.5" />
        </label>
        <input aria-label="Zoom" defaultValue="18.2 %" className="h-[35px] w-[45px] bg-[#bdbdbd] pl-0.5 text-[14px] outline-none" />
        <button aria-label="Zoom presets" className="flex h-[35px] w-[26px] items-center justify-center rounded-sm border border-[#444] bg-[#cbcbcb]">
          <Chevron className="h-3.5 w-3.5" />
        </button>
        <span className="pl-0.5 text-[17px]">Layer copy #8 (7.4 GB)</span>
      </div>
    </main>
  );
}

/* ---------- layers dock ---------- */

const LAYERS = [
  ['70E1E6', 'bg-[#70e1e6]'],
  ['FE4E98', 'bg-[#fe4e98]'],
  ['38A8C4', 'bg-[#38a8c4]'],
  ['1385AA', 'bg-[#1385aa]'],
  ['17AFC0', 'bg-[#17afc0]'],
  ['56C1E8', 'bg-[#56c1e8]'],
  ['9ACCE1', 'bg-[#9acce1]'],
  ['559CC4', 'bg-[#559cc4]'],
  ['63B4D7', 'bg-[#63b4d7]'],
  ['16B5F5', 'bg-[#16b5f5]'],
  ['442DBC', 'bg-[#442dbc]'],
  ['01C5CF', 'bg-[#01c5cf]'],
  ['CCD0AA', 'bg-[#ccd0aa]'],
  ['CF3476', 'bg-[#cf3476]'],
  ['FC89AC', 'bg-[#fc89ac]'],
  ['F4C2C2', 'bg-[#f4c2c2]'],
  ['674846', 'bg-[#674846]'],
  ['FF0080 #1', 'bg-[#ff0080]'],
  ['E30B5C #1', 'bg-[#e30b5c]'],
];

function Eye({ className = 'h-3 w-[18px]' }: { className?: string }) {
  return (
    <Icon box="0 0 18 12" className={className}>
      <path d="M.7 6C4-.7 14-.7 17.300 6 14 12.700 4 12.700.7 6z" fill="#fff" stroke="#555753" strokeWidth="1.300" />
      <circle cx="9" cy="6" r="4.200" fill="#3465a4" stroke="#204a87" />
      <circle cx="9" cy="6" r="1.700" fill="#102540" />
    </Icon>
  );
}

const DOCK_TABS: { name: string; art: ReactNode }[] = [
  {
    name: 'Layers',
    art: (
      <g fill="#f6f6f5" stroke="#777" strokeWidth="1">
        <path d="M6 11h18l-4 14H2z" />
        <path d="M6 7h18l-4 14H2z" />
        <path d="M6 2h18l-4 15H2z" />
      </g>
    ),
  },
  {
    name: 'Tool Options',
    art: (
      <g>
        <path d="M13 1v5M6 19l-4 6M20 19l4 6M2 22h22" stroke="#c98a2b" strokeWidth="2" />
        <path d="M2 5h22v14H2z" fill="#efefee" stroke="#444" />
        <circle cx="13" cy="2.500" r="1.800" fill="#c98a2b" />
      </g>
    ),
  },
  {
    name: 'Patterns',
    art: (
      <g>
        <path d="M.6.6h24.800v24.800H.6z" fill="#efb0c9" stroke="#000" strokeWidth="1.200" />
        <path d="M4 8h7v2H4zM13 14h8v2h-8z" fill="#f4a3c0" opacity=".5" />
        <path d="M9 18h8v3H9z" fill="#f596b9" opacity=".7" />
      </g>
    ),
  },
  {
    name: 'Fonts',
    art: (
      <g>
        <path d="M.6.6h24.800v24.800H.6z" fill="#fff" stroke="#000" strokeWidth="1.200" />
        <text x="13" y="18.500" textAnchor="middle" fontSize="16" fontFamily="Noto Sans, sans-serif" fill="#000">
          Aɑ
        </text>
      </g>
    ),
  },
  { name: 'Images', art: <path d="M.6.6h24.800v24.800H.6z" fill={PINK} stroke="#000" strokeWidth="1.200" /> },
  {
    name: 'Undo History',
    art: (
      <g stroke="#a58a00" strokeLinejoin="round">
        <path d="M11 7l6-5v3c9 0 10 9 2 10 3-3 2-5-2-5v3z" fill="#f0e18a" />
        <path d="M1 17l7-6v4c11-1 16 3 12 9-1-4-4-5-12-4v4z" fill="#edd400" />
      </g>
    ),
  },
  {
    name: 'MyPaint Brushes',
    art: (
      <g>
        <path d="M.6.6h24.800v24.800H.6z" fill="#b4cbe9" stroke="#000" strokeWidth="1.200" />
        <path d="M14 1.200h10.800V19H14z" fill="#7fa6dc" />
        <path d="M1.200 1.200H7V19H1.200z" fill="#dfe9f5" />
        <path d="M7 6c4-2 8-3 12-2M6 11c5-2 8-2 13-2M9 15c4-1 7-1 10-1" stroke="#3f5673" strokeWidth="4" strokeLinecap="round" opacity=".5" />
        <path d="M1.200 20h23.600v4.800H1.200z" fill="#fff" />
        <path d="M3 22.500h20" stroke="#333" strokeWidth="1.500" strokeDasharray="2 1" />
      </g>
    ),
  },
  {
    name: 'Palettes',
    art: (
      <g>
        <path d="M3 5C7-1 22 0 24 10c1 8-4 15-11 14-6-1-1-6-5-8C4 14 0 10 3 5z" fill="#e9b96e" stroke="#b07a26" />
        <circle cx="9" cy="6" r="1.800" fill="#fff" />
        <circle cx="18" cy="10" r="3" fill="#3465a4" />
        <circle cx="18" cy="18" r="3" fill="#73d216" />
        <circle cx="10" cy="19" r="3.200" fill="#cc0000" />
      </g>
    ),
  },
];

const LAYER_ACTIONS: { name: string; art: ReactNode }[] = [
  { name: 'New layer', art: <NewPageIcon /> },
  {
    name: 'New layer group',
    art: (
      <Icon box="0 0 24 24" className="h-6 w-6">
        <path d="M2 6h10l2-2h8v5H2z" fill="#eee" stroke="#999" />
        <path d="M1 8h22v15H1z" fill="#729fcf" stroke="#5583b8" />
        <path d="M6 1v11M.500 6.500h11" stroke="#000" strokeWidth="2.200" />
      </Icon>
    ),
  },
  {
    name: 'Raise layer',
    art: (
      <Icon box="0 0 24 24" className="h-6 w-6">
        <path d="M2 17l10-9 10 9" stroke="#f57900" strokeWidth="4" />
      </Icon>
    ),
  },
  {
    name: 'Lower layer',
    art: (
      <Icon box="0 0 24 24" className="h-6 w-6">
        <path d="M2 7l10 9L22 7" stroke="#f57900" strokeWidth="4" />
      </Icon>
    ),
  },
  { name: 'Duplicate layer', art: <DupIcon /> },
  {
    name: 'Merge layer down',
    art: (
      <Icon box="0 0 24 24" className="h-6 w-6">
        <path d="M5 1.500h10l-4 6H1zM5 9h10l-4 6H1zM5 16.500h10l-4 6H1z" fill="#fff" stroke="#aaa" />
        <path d="M18 4h3v12h3l-4.500 6L15 16h3z" fill="#fcaf3e" stroke="#ce7c10" />
      </Icon>
    ),
  },
  {
    name: 'Add layer mask',
    art: (
      <Icon box="0 0 24 24" className="h-6 w-6">
        <path d="M8 5.500h15L18 19H3z" fill="#f8f8f8" stroke="#999" />
        <path d="M.7 1h11v7c0 4-3 5-5.500 6-3-1-5.500-2-5.500-6z" fill="#d7dbd2" stroke="#8a8d84" />
        <path d="M3 9c2 2 5 2 7 0" stroke="#888" />
      </Icon>
    ),
  },
  {
    name: 'Delete layer',
    art: (
      <Icon box="0 0 24 24" className="h-6 w-6">
        <path d="M5 5l14 14M19 5L5 19" stroke="#cc0000" strokeWidth="5.500" />
      </Icon>
    ),
  },
];

function LayersDock() {
  return (
    <aside aria-label="Layers" className="flex w-[385px] shrink-0 flex-col border-b border-[#c3c3c3] pt-0.5 text-[17px]">
      <div className="flex h-8 shrink-0 items-center justify-between border-b border-[#c3c3c3] pr-[5px]">
        <div className="grid h-8 w-[252px] grid-cols-8">
          {DOCK_TABS.map(({ name, art }, i) => (
            <button
              key={name}
              aria-label={name}
              className={
                i === 0
                  ? 'flex h-8 items-center justify-center border border-b-0 border-[#a0a0a0] bg-[#d8d8d8]'
                  : 'flex h-8 items-center justify-center border-r border-[#c8c8c8]'
              }
            >
              <Icon box="0 0 26 26" className="h-[26px] w-[26px]">
                {art}
              </Icon>
            </button>
          ))}
        </div>
        <DockMenuButton />
      </div>
      <div className="flex min-h-0 flex-1 flex-col border-l border-[#c3c3c3] bg-[#d9d9d9] pt-0.5 pr-[3px] pl-0.5">
        <div className="flex h-[34px] shrink-0 gap-0.5">
          <label className="flex flex-1 items-center rounded-sm border border-[#444] bg-[#cbcbcb] p-0.5">
            <span className="flex h-7 flex-1 items-center border border-dotted border-[#333] px-[3px]">
              Mode
              <select className="ml-auto appearance-none bg-transparent pr-2.5 outline-none">
                <option>Normal</option>
              </select>
              <Chevron className="mr-0.5 h-3.5 w-3.5" />
            </span>
          </label>
          <button aria-label="Switch mode group" className="flex w-12 items-center justify-between rounded-sm border border-[#444] bg-[#cbcbcb] px-1">
            <Icon box="0 0 14 14" className="h-3.5 w-3.5">
              <path d="M5 4.500c6-3 10 3 5 8" stroke="#f0a010" strokeWidth="2" />
              <path d="M0 5l5-4 1 6z" fill="#f0b020" />
              <circle cx="3" cy="11" r="2" fill="#3465a4" />
            </Icon>
            <Chevron className="mr-1 h-3.5 w-3.5" />
          </button>
        </div>
        <label className="mt-px flex h-6 shrink-0 items-center border border-[#777] bg-[#c8c8c8] pl-px">
          Opacity
          <input defaultValue="100.0" className="min-w-0 flex-1 border-r border-black bg-transparent pr-px text-right outline-none" />
          <Spinner dimUp />
        </label>
        <div className="flex h-[25px] shrink-0 items-center gap-[11px]">
          <span className="-mr-1">Lock:</span>
          <button aria-label="Lock pixels">
            <Icon className="h-3.5 w-3.5">{TOOLS[22].art}</Icon>
          </button>
          <button aria-label="Lock position">
            <Icon className="h-3.5 w-3.5">{TOOLS[7].art}</Icon>
          </button>
          <button aria-label="Lock alpha channel">
            <Icon box="0 0 14 14" className="h-3.5 w-3.5">
              <path d="M.5.5h13v13H.5z" fill="#ccc" stroke="#666" />
              <path d="M1 1h4v4H1zM9 1h4v4H9zM5 5h4v4H5zM1 9h4v4H1zM9 9h4v4H9z" fill="#b4b4b4" />
            </Icon>
          </button>
        </div>
        <div className="flex min-h-0 flex-1">
          <div className="flex min-h-0 flex-1 flex-col overflow-hidden border border-[#6e6e6e] bg-[#bdbdbd]">
            <div className="flex h-[29px] shrink-0 bg-linear-to-b from-[#a0a0a0] to-[#ababab]">
              <div className="flex w-7 items-center justify-center border-r border-[#b0b0b0]">
                <Eye className="h-2 w-3" />
              </div>
              <div className="flex w-7 items-center justify-center border-r border-[#b0b0b0]">
                <Icon box="0 0 8 10" className="h-2.5 w-2">
                  <path d="M1 0v10M7 0L4 4h3M7 10L4 6h3" stroke="#e0e0e0" />
                  <path d="M2.500 0v10" stroke="#777" />
                </Icon>
              </div>
            </div>
            <ul className="-mb-0.5 flex min-h-0 flex-1 flex-col justify-end overflow-hidden">
              {LAYERS.map(([name, fill]) => (
                <li key={name} className="flex h-10 shrink-0 items-center pl-[5px]">
                  <Eye />
                  <span className={`mr-1 ml-[52px] h-9 w-9 border-2 border-black ${fill}`} />
                  {name}
                </li>
              ))}
            </ul>
          </div>
          <div className="ml-px flex w-[14px] flex-col bg-linear-to-r from-[#dedede] to-[#d2d2d2]">
            <div className="h-[218px]" />
            <div className="h-[76px] rounded-xs bg-[#b4b4b4]" />
          </div>
        </div>
        <div className="mt-px mr-4 h-[14px] shrink-0">
          <div className="h-[13px] w-[300px] rounded-xs bg-[#b4b4b4]" />
        </div>
      </div>
      <div className="flex h-[38px] shrink-0 items-center justify-between border-l border-[#c3c3c3] bg-[#d9d9d9] pr-[17px] pl-3">
        {LAYER_ACTIONS.map(({ name, art }) => (
          <button key={name} aria-label={name}>
            {art}
          </button>
        ))}
      </div>
    </aside>
  );
}

/* ---------- import dialog ---------- */

function SourceRadio({ label, checked = false }: { label: string; checked?: boolean }) {
  return (
    <label className={checked ? 'flex w-[157px] items-center gap-[5px] pl-[26px] text-[#1c1c1c]' : 'flex w-[157px] items-center gap-[5px] pl-[26px]'}>
      <input
        type="radio"
        name="source"
        defaultChecked={checked}
        className="h-[13px] w-[13px] shrink-0 appearance-none rounded-full bg-[#a3a3a3] checked:border-4 checked:border-[#a3a3a3] checked:bg-white"
      />
      <span className="whitespace-nowrap">{label}</span>
    </label>
  );
}

function MergeCheck({ label }: { label: string }) {
  return (
    <label className="flex h-8 items-center gap-[5px] pl-[159px] whitespace-nowrap text-[#1c1c1c]">
      <span className="relative flex h-[13px] w-[13px] shrink-0">
        <input type="checkbox" defaultChecked className="h-[13px] w-[13px] appearance-none rounded-xs bg-[#8c8c8c]" />
        <svg viewBox="0 0 13 13" className="pointer-events-none absolute inset-0 h-[13px] w-[13px]" aria-hidden="true">
          <path d="M3.500 3.500l6 6M9.500 3.500l-6 6" stroke="#fff" strokeWidth="2" />
        </svg>
      </span>
      {label}
    </label>
  );
}

function ScaleRow({ label, value, position, atMin = false }: { label: string; value: string; position: number; atMin?: boolean }) {
  return (
    <div className="flex h-8 items-center pl-6">
      <span className="w-[185px] whitespace-nowrap">{label}</span>
      <input
        type="range"
        aria-label={label}
        defaultValue={position}
        className="h-3.5 w-[73px] appearance-none border-y border-[#f0f0f0] bg-linear-to-b from-[#e2e2e2] to-[#d4d4d4] [&::-webkit-slider-thumb]:h-3 [&::-webkit-slider-thumb]:w-3 [&::-webkit-slider-thumb]:appearance-none [&::-webkit-slider-thumb]:rounded-xs [&::-webkit-slider-thumb]:bg-[#b0b0b0]"
      />
      <div className="ml-auto flex h-8 w-[87px]">
        <input
          aria-label={`${label} value`}
          defaultValue={value}
          className={
            atMin
              ? 'w-[73px] border-y-2 border-l-2 border-[#dddddd] bg-[#bdbdbd] pl-0.5 outline-none'
              : 'w-[73px] bg-[#bdbdbd] pl-1 outline-none'
          }
        />
        <Icon box="0 0 14 32" className="h-8 w-3.5 bg-[#a5a5a5]">
          <path d="M3 10h8L7 6z" fill="#333" />
          <path d="M3 22h8l-4 4z" fill={atMin ? '#bdbdbd' : '#333'} />
          <path d="M0 16h14" stroke="#b0b0b0" />
        </Icon>
      </div>
    </div>
  );
}

const DIALOG_BUTTON = 'h-[34px] w-[86px] rounded-sm border border-[#444] bg-[#cbcbcb]';

function ImportDialog() {
  return (
    <div
      role="dialog"
      aria-label="Import a New Palette"
      className="absolute top-80 left-[351px] flex w-[633px] flex-col border border-[#8a8a8a] bg-[#dddddd] text-[20px] leading-6 shadow-[2px_6px_18px_rgba(0,0,0,0.35)]"
    >
      <div className="flex h-11 items-center bg-white pr-[17px] pl-2.5 font-['Open_Sans',sans-serif] text-[#999]">
        <Wilber />
        <span className="pl-1.5 text-[17px]">Import a New Palette</span>
        <button aria-label="Close dialog" className="ml-auto">
          <Icon box="0 0 16 16" className="h-4 w-4">
            <path d="M.5.5l15 15M15.500.5l-15 15" stroke="#888" />
          </Icon>
        </button>
      </div>
      <div className="flex items-start justify-between px-3 pt-3">
        <div className="flex w-[377px] flex-col">
          <h2 className="h-[26px] font-bold">Select Source</h2>
          <div className="flex h-[38px]">
            <SourceRadio label="Gradient" />
            <span className="flex h-[38px] flex-1 items-center rounded-sm border border-[#444] bg-[#8c8c8c] pr-2.5 pl-1 text-[#5c5c5c]">
              <span className="h-[15px] w-[26px] shrink-0 border border-black bg-linear-to-r from-[#86532b] to-[#ca84bd]" />
              <select aria-label="Gradient name" disabled className="min-w-0 flex-1 appearance-none bg-transparent pl-0.5 opacity-100 outline-none">
                <option>FG to BG (RGB)</option>
              </select>
              <Chevron className="h-3.5 w-3.5" />
            </span>
          </div>
          <div className="mt-1.5 flex h-[38px]">
            <SourceRadio label="Image" checked />
            <span className="flex h-[38px] flex-1 items-center rounded-sm border border-[#444] bg-[#cbcbcb] pr-2.5 pl-1">
              <span className="h-[26px] w-[26px] shrink-0 border border-black bg-[#ca84bd]" />
              <select aria-label="Image name" className="min-w-0 flex-1 appearance-none bg-transparent pl-0.5 outline-none">
                <option>[My Fa…tten)-1</option>
              </select>
              <Chevron className="h-3.5 w-3.5" />
            </span>
          </div>
          <div className="flex flex-col py-[3px]">
            <MergeCheck label="Sample Merged" />
            <MergeCheck label="Selected Pixels only" />
          </div>
          <div className="flex h-[38px]">
            <SourceRadio label="Palette file" />
            <button disabled className="flex h-[38px] flex-1 items-center rounded-sm border border-[#444] bg-[#8c8c8c] pr-1 pl-2 text-[#5c5c5c]">
              (None)
              <span className="mr-[5px] ml-auto h-7 w-px bg-[#333]" />
              <Icon box="0 0 14 14" className="h-3.5 w-3.5">
                <path d="M3 0h6l3 3v9H1z" fill="#bcbcbc" />
                <path d="M1 7h12l-1 6H1z" fill="#7b8ca6" />
              </Icon>
            </button>
          </div>
          <h2 className="mt-3 h-[26px] font-bold">Import Options</h2>
          <div className="flex flex-col gap-1.5">
            <label className="flex h-8 items-center pl-6">
              <span className="w-[183px]">Palette name:</span>
              <input defaultValue="[My Fav colors] (" className="h-8 min-w-0 flex-1 bg-[#bdbdbd] pl-1 outline-none" />
            </label>
            <ScaleRow label="Number of colors:" value="190" position={53} />
            <ScaleRow label="Columns:" value="5" position={9} />
            <ScaleRow label="Interval:" value="1" position={0} atMin />
          </div>
        </div>
        <div className="flex w-[218px] flex-col">
          <h2 className="h-[26px] font-bold">Preview</h2>
          <div className="ml-6 h-[194px] w-[194px] border border-black bg-white">
            <div className="h-[38px] w-[38px] bg-[#ca84bd]" />
          </div>
        </div>
      </div>
      <div className="flex gap-1.5 px-3 pt-6 pb-[11px]">
        <button className={`mr-auto ${DIALOG_BUTTON}`}>Help</button>
        <button className={DIALOG_BUTTON}>Import</button>
        <button className={DIALOG_BUTTON}>Cancel</button>
      </div>
    </div>
  );
}

/* ---------- taskbar ---------- */

const APPS: { name: string; art: ReactNode; line?: 'one' | 'many'; active?: boolean }[] = [
  {
    name: 'Photos',
    art: (
      <g>
        <path d="M0 0h32v32H0z" fill="#2a9fe8" />
        <path d="M20 0h12v20H20z" fill="#5c8ae0" />
        <circle cx="21" cy="8" r="3.500" fill="#fff" />
        <path d="M16 22l8-8 8 8v10H16z" fill="#4668c8" />
        <path d="M0 20l9-9 17 21H0z" fill="#173f78" />
      </g>
    ),
  },
  {
    name: 'Photoshop Elements',
    art: (
      <g>
        <path d="M-1 0h34v32H-1z" fill="#1f1b33" stroke="#555" />
        <path d="M9 5l18 6-4 17-18-6z" stroke="#a9c7d8" strokeWidth="1.300" />
        <circle cx="16" cy="16.500" r="4" stroke="#18a4e0" strokeWidth="3" strokeDasharray="3 1" />
      </g>
    ),
  },
  {
    name: 'File Explorer',
    art: (
      <g>
        <path d="M0 3h13l2 3v5H0z" fill="#e0a010" />
        <path d="M0 9l15 0 3-3h14v23H0z" fill="#fcd462" />
        <path d="M5 30V17h22v13h-6v-6H11v6z" fill="#3b8fd8" />
      </g>
    ),
  },
  {
    name: 'Firefox',
    line: 'many',
    art: (
      <g>
        <path d="M19 0c1 5 5 6 8 9 4 4 5 9 4 14-2 6-8 9-15 9C7 32 0 26 0 18 0 13 1 10 4 6l1 3 3-4 2 4c3-1 6 0 7 1 1-3 0-6 2-10z" fill="#ff7139" />
        <path d="M19 0c1 5 5 6 8 9 4 4 5 9 4 14l-6-4c1-6-4-9-8-9 1-3 0-6 2-10z" fill="#ffd43a" />
        <circle cx="16" cy="17" r="7.500" fill="#7542e5" />
        <path d="M1 13c4-3 7-2 9-2 3 0 5 1 6 3-4 0-5 3-7 3 2 6 9 7 15 2 0 6-5 9-10 8C6 27 1 20 1 13z" fill="#ff4a55" />
        <path d="M5 10c4-1 9 0 11 4-4 0-5 3-7 3z" fill="#ff9640" />
      </g>
    ),
  },
  {
    name: 'Resource Monitor',
    line: 'one',
    art: (
      <g>
        <path d="M0 7l5-2v17l-5-2z" fill="#bbb" stroke="#888" />
        <circle cx="2.500" cy="10" r="1.200" fill="#3c3" />
        <path d="M6 1l26 3-2 20L7 21z" fill="#dedede" stroke="#999" />
        <path d="M9 4l20 2-2 15L9 19z" fill="#e8f2fa" />
        <path d="M10 14l3 0 2-4 2 8 3-10 2 8 2-3h3" stroke="#2882b8" strokeWidth="1.400" />
        <path d="M17 23h6v4h-6z" fill="#bbb" />
        <ellipse cx="20" cy="29" rx="7" ry="3" fill="#ccc" stroke="#999" />
        <path d="M0 26l9-3 5 2-10 4z" fill="#eee" stroke="#999" />
      </g>
    ),
  },
  {
    name: 'Solitaire',
    art: (
      <g>
        <path d="M-2-2h36v36H-2z" fill="#39a839" />
        <path d="M5 13l6-2 4 10-4 2zM10 11l6-1v12h-4zM16 10h6l-2 12h-4zM22 11l5 2-6 10-4-2z" fill="#fff" stroke="#39a839" strokeWidth=".5" />
        <path d="M8 15h2M23 14h2" stroke="#d22" strokeWidth="2" />
        <path d="M12.500 14h2M18 14h2" stroke="#111" strokeWidth="2" />
      </g>
    ),
  },
  {
    name: 'Camera',
    line: 'one',
    art: (
      <g>
        <rect x="-2" y="-2" width="36" height="36" rx="3" fill="#11265e" />
        <path d="M5 10h5l2-4h9l2 4h5v15H5z" fill="#fff" />
        <circle cx="16" cy="17" r="6" fill="#fff" stroke="#11265e" strokeWidth="2.500" />
        <circle cx="16" cy="17" r="3" fill="#11265e" />
      </g>
    ),
  },
  {
    name: 'Voice Recorder',
    art: (
      <g>
        <rect x="9" y="-2" width="14" height="28" rx="2" fill="#8e9499" />
        <path d="M9 13h14v11H9z" fill="#4b5157" />
        <circle cx="16" cy="18" r="3" fill="#f15a24" />
        <path d="M6 18v8h20v-8M16 26v7M9 33h14" stroke="#737a80" strokeWidth="2.500" />
      </g>
    ),
  },
  {
    name: 'Avocode',
    art: (
      <g>
        <circle cx="16" cy="16" r="17" fill="#efe9e6" stroke="#ddd" />
        <path d="M22 23V15a6.500 6.500 0 1 0-6 7c4 0 6-2 6-6" stroke="#f0604f" strokeWidth="2.800" strokeLinecap="round" />
      </g>
    ),
  },
  { name: 'GIMP', line: 'many', active: true, art: null },
  {
    name: 'LibreOffice Writer',
    line: 'many',
    art: (
      <g>
        <path d="M2-1h18l10 10v24H2z" fill="#fff" stroke="#1585c9" strokeWidth="3" />
        <path d="M20-2h11v11z" fill="#0a6cb3" />
        <path d="M7 11h7M7 15h7M7 19h18M7 23h18M7 27h12" stroke="#1585c9" strokeWidth="2" />
        <path d="M17 10h8v7h-8z" fill="#1585c9" />
      </g>
    ),
  },
];

const TRAY: { name: string; art: ReactNode }[] = [
  { name: 'Show hidden icons', art: <path d="M2 15l8.500-8 8.500 8" strokeWidth="1.500" /> },
  { name: 'Meet Now', art: <path d="M5 3c3-3 9-3 12 0M5 19c3 3 9 3 12 0M5.500 6h8v10h-8zM13.500 10l4-3v8l-4-3" strokeWidth="1.300" /> },
  {
    name: 'OneDrive',
    art: (
      <g>
        <path d="M4 19a5 5 0 0 1-1-9c2-8 13-9 15 0 6 1 5 9 0 9z" fill="#9a9a9a" stroke="#333" />
        <path d="M1 16l10-5 10 5c-1 2-2 3-4 3H4z" fill="#e8e8e8" stroke="#444" />
      </g>
    ),
  },
  {
    name: 'Windows Update',
    art: (
      <g>
        <path d="M1 4l20-3v18L1 17z" strokeWidth="1.300" />
        <path d="M7 9c1-4 6-4 8-1V5M15 11c-1 4-6 4-8 1v3" strokeWidth="1.300" />
        <circle cx="17" cy="17" r="5" fill="#2f72bd" stroke="none" />
      </g>
    ),
  },
  {
    name: 'Battery',
    art: (
      <g>
        <path d="M6 6h14v11H6z" />
        <path d="M8 8h10v7H8z" fill="#000" />
        <path d="M0 3v4h5V3M2.500 7v6h5M1 0v3M4 0v3M20 9.500h1.500v4H20" strokeWidth="1.300" />
      </g>
    ),
  },
  {
    name: 'Dropbox',
    art: <path d="M5.500 0L11 3.500 5.500 7 0 3.500zM16.500 0L22 3.500 16.500 7 11 3.500zM5.500 7.500L11 11l-5.500 3.500L0 11zM16.500 7.500L22 11l-5.500 3.500L11 11zM11 14.500l5 3.500-5 3.500L6 18z" fill="#000" stroke="none" />,
  },
  { name: 'Wi-Fi', art: <path d="M2 20C2 10 9 2 19 2M6 20c0-8 5-14 13-14M10 20c0-6 3-10 9-10M14 20c0-3 2-6 5-6M17 19h2" strokeWidth="1.300" /> },
  { name: 'Volume', art: <path d="M1 7.500h4l5-5v17l-5-5H1zM13 8c1 2 1 4 0 6M16 5.500c2 3 2 8 0 11M19 3c3 4 3 12 0 16" /> },
];

function TaskbarLine({ kind }: { kind: 'one' | 'many' }) {
  return (
    <span className="absolute inset-x-[7px] bottom-0 flex h-1">
      <span className="flex-1 bg-[#0078d7]" />
      {kind === 'many' && <span className="w-3 bg-[#66a9e6]" />}
    </span>
  );
}

function Taskbar() {
  return (
    <footer className="flex h-[60px] shrink-0 bg-[linear-gradient(to_right,#d6e6ec,#d3e2ea_28%,#ececec_42%,#efefef_86%,#cfe1ea)] font-['Open_Sans',sans-serif] text-[17px] text-black">
      <button aria-label="Start" className="flex w-[72px] items-center justify-center">
        <Icon box="0 0 24 24" className="h-6 w-6">
          <path d="M0 3.500l10-1.400v9.400H0zM11.300 2L24 .2v11.300H11.300zM0 12.700h10v9.200L0 20.500zM11.300 12.700H24v11.100L11.300 22z" fill="#000" />
        </Icon>
      </button>
      <button aria-label="Search" className="flex w-[72px] items-center justify-center">
        <Icon className="h-8 w-8">
          <circle cx="19.500" cy="12.500" r="11" stroke="#000" strokeWidth="3" />
          <path d="M12 21L1 31.500" stroke="#000" strokeWidth="3.500" />
        </Icon>
      </button>
      <button aria-label="Task View" className="flex w-[72px] items-center justify-center">
        <Icon box="0 0 24 24" className="h-6 w-6">
          <path d="M1 0v5h15V0M1 24v-5h15v5M1 8h15v8H1zM21.500 0v6M21.500 12v12" stroke="#111" strokeWidth="1.400" />
          <path d="M20 6.500h3v4h-3z" fill="#111" />
        </Icon>
      </button>
      <div className="flex pl-1">
        {APPS.map(({ name, art, line, active }) => (
          <button
            key={name}
            aria-label={name}
            className={active ? 'relative flex w-[75px] items-center justify-center bg-white/60' : 'relative flex w-[75px] items-center justify-center'}
          >
            {art ? <Icon className="h-8 w-8 overflow-visible">{art}</Icon> : <Wilber className="h-9 w-9" />}
            {line && <TaskbarLine kind={line} />}
          </button>
        ))}
      </div>
      <div className="ml-auto flex">
        {TRAY.map(({ name, art }) => (
          <button key={name} aria-label={name} className="flex w-12 items-center justify-center">
            <Icon box="0 0 22 22" className="h-[22px] w-[22px]">
              <g stroke="#111">{art}</g>
            </Icon>
          </button>
        ))}
        <button aria-label="Windows Ink" className="flex w-[62px] items-center justify-center">
          <Icon box="0 0 22 22" className="h-[22px] w-[22px]">
            <path d="M8 16L18 1l3 2L11 17zM8 16c-1-5-5-3-6 0-1 4 1 6 4 4l5-7M11 17c2 3 6 0 4-4" stroke="#111" strokeWidth="1.300" />
          </Icon>
        </button>
        <button aria-label="Touch keyboard" className="flex w-14 items-center justify-center">
          <Icon box="0 0 32 20" className="h-5 w-8">
            <path d="M.7.7h30.600v18.600H.7z" stroke="#111" strokeWidth="1.300" />
            <path d="M4 5h24M4 10h24" stroke="#111" strokeWidth="2" strokeDasharray="2 2" />
            <path d="M7 15h18" stroke="#111" strokeWidth="1.500" />
          </Icon>
        </button>
        <button className="w-[60px]">ENG</button>
        <button className="w-[106px] leading-7">
          10:57 AM
          <br />
          2023-06-13
        </button>
        <button aria-label="Notifications" className="flex w-[83px] items-center pt-4 pl-5">
          <svg viewBox="0 0 40 40" className="h-10 w-10" aria-hidden="true">
            <path d="M0 0h24v20H14l-6 5v-5H0z" fill="#000" />
            <path d="M4 5h16M4 9.500h16M4 14h8" stroke="#fff" strokeWidth="1.500" />
            <circle cx="24" cy="24" r="14.500" fill="#cfd3d5" stroke="#888" />
            <text x="24" y="30" textAnchor="middle" fontSize="17" fontWeight="600" fill="#000">
              37
            </text>
          </svg>
        </button>
      </div>
    </footer>
  );
}

/* ---------- window ---------- */

const MENUS = ['File', 'Edit', 'Select', 'View', 'Image', 'Layer', 'Colors', 'Tools', 'Filters', 'Windows', 'Help'];

function PaneGrip() {
  return (
    <div className="flex w-0.5 shrink-0 flex-col gap-[3px] pt-[467px]">
      <span className="h-1 w-0.5 bg-[#444]" />
      <span className="h-1 w-0.5 bg-[#444]" />
      <span className="h-1 w-0.5 bg-[#444]" />
    </div>
  );
}

export default function App() {
  return (
    <div className="relative flex h-screen flex-col overflow-hidden bg-[#dddddd] font-['DejaVu_Sans',sans-serif] text-[#383838]">
      <header className="flex h-[34px] shrink-0 items-center bg-white pl-0.5 font-['Open_Sans',sans-serif] text-black">
        <span className="flex h-6 w-6 items-center bg-[#ca84bd] pb-2 pl-1">
          <Wilber className="h-5 w-5" />
        </span>
        <h1 className="pl-[5px] text-[17px]">
          *[My Fav colors] (overwritten)-1.0 (RGB color 8-bit gamma integer, GIMP built-in sRGB, 184 layers) 3000x3000 – GIMP
        </h1>
        <div className="ml-auto flex">
          <button aria-label="Minimize" className="flex w-[70px] justify-center">
            <Icon box="0 0 16 16" className="h-4 w-4">
              <path d="M0 8.500h16" stroke="#000" />
            </Icon>
          </button>
          <button aria-label="Restore" className="flex w-[70px] justify-center">
            <Icon box="0 0 16 16" className="h-4 w-4">
              <path d="M.5 3.500h12v12H.5zM3.500 3.500v-3h12v12h-3" stroke="#000" />
            </Icon>
          </button>
          <button aria-label="Close" className="flex w-[72px] justify-center">
            <Icon box="0 0 16 16" className="h-4 w-4">
              <path d="M.5.5l15 15M15.500.5l-15 15" stroke="#000" strokeWidth="1.200" />
            </Icon>
          </button>
        </div>
      </header>
      <nav className="flex h-[35px] shrink-0 items-center gap-3 bg-[#b8b8b8] pt-px pl-[7px] font-['Open_Sans',sans-serif] text-[17px] text-[#444]">
        {MENUS.map((menu) => (
          <button key={menu}>{menu}</button>
        ))}
      </nav>
      <div className="flex min-h-0 flex-1">
        <aside className="flex w-[235px] shrink-0 flex-col border-r border-b border-[#c3c3c3]">
          <Toolbox />
          <Brushes />
        </aside>
        <PaneGrip />
        <ImageWindow />
        <PaneGrip />
        <LayersDock />
      </div>
      <Taskbar />
      <ImportDialog />
    </div>
  );
}
